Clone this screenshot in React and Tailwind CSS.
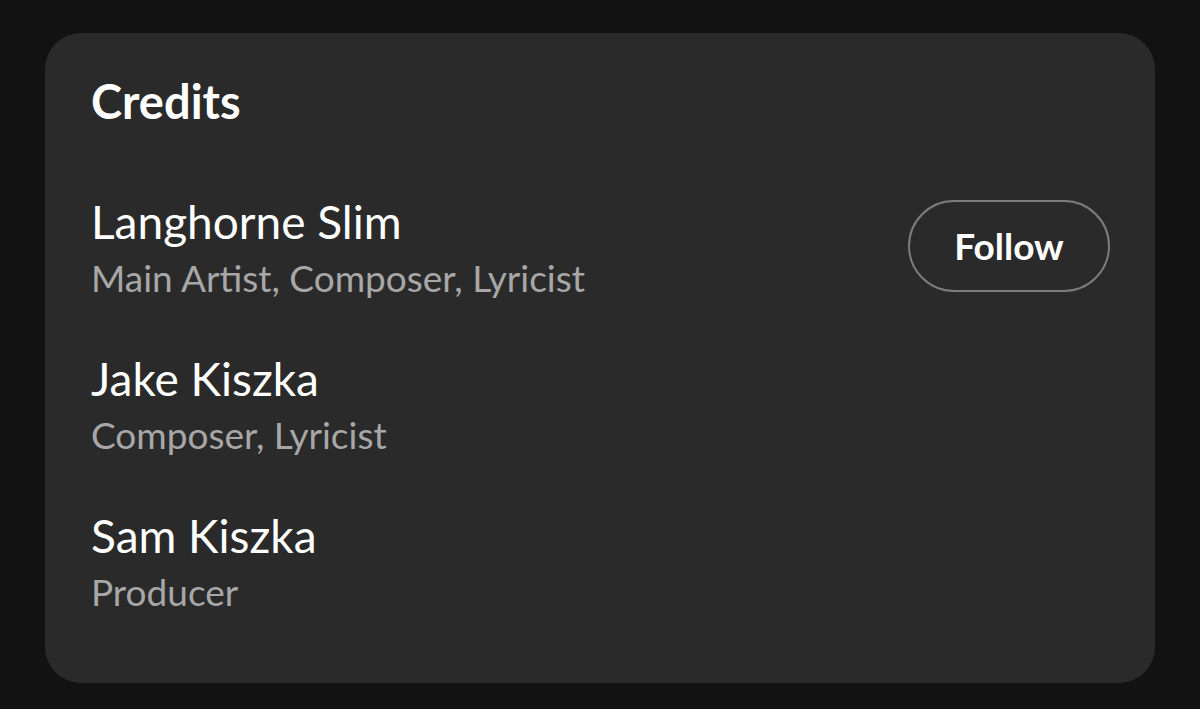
import React from "react";

const credits = [
  { name: "Langhorne Slim", roles: "Main Artist, Composer, Lyricist", follow: true },
  { name: "Jake Kiszka", roles: "Composer, Lyricist" },
  { name: "Sam Kiszka", roles: "Producer" },
];

const CreditRow = ({ name, roles, follow }) => (
  <div className="flex items-center justify-between">
    <div className="flex flex-col">
      <span className="text-[46px] leading-[56px] text-white">{name}</span>
      <span className="text-[37px] leading-[56px] text-[#a7a7a7]">{roles}</span>
    </div>
    {follow && (
      <button className="mb-[8px] mr-[45px] h-[92px] w-[202px] rounded-full border-2 border-[#7c7c7c] text-[37px] font-bold text-white">
        Follow
      </button>
    )}
  </div>
);

export default function App() {
  return (
    <div
      className="h-[709px] w-[1200px] bg-[#121212] px-[45px] pt-[33px]"
      style={{ fontFamily: "Lato, 'Noto Sans', sans-serif" }}
    >
      <div className="flex h-[650px] flex-col rounded-[36px] bg-[#2a2a2a] pl-[46px] pt-[44px]">
        <h2 className="text-[47px] font-bold leading-[48px] text-white">Credits</h2>
        <div className="mt-[69px] flex flex-col gap-[45px]">
          {credits.map((c) => (
            <CreditRow key={c.name} {...c} />
          ))}
        </div>
      </div>
    </div>
  );
}
